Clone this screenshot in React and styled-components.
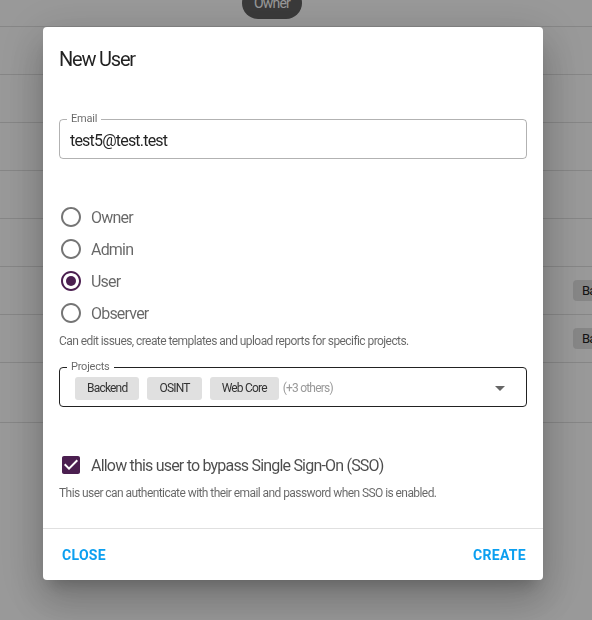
import React from 'react'
import styled, { createGlobalStyle } from 'styled-components'

const GlobalStyle = createGlobalStyle`
  body {
    margin: 0;
    font-family: Roboto, "Liberation Sans", sans-serif;
    letter-spacing: -0.05em;
    background: #fff;
  }
`

const purple = '#4b1f50'
const blue = '#0b9ff0'

// --- page behind the dialog ---
const Page = styled.div`
  width: 592px;
  height: 620px;
  overflow: hidden;
`

const Table = styled.div`
  margin-top: -21px;
`

const Row = styled.div`
  display: grid;
  grid-template-columns: 242px 331px 1fr;
  align-items: center;
  height: ${p => p.tall ? 59 : 47}px;
  border-bottom: 1px solid #e0e0e0;
`

const RoleChip = styled.span`
  display: inline-flex;
  align-items: center;
  height: 32px;
  padding: 0 12px;
  border-radius: 16px;
  background: #616161;
  color: #fff;
  font-size: 14px;
  width: max-content;
`

const TagChip = styled.span`
  grid-column: 3;
  display: inline-flex;
  align-items: center;
  height: 21px;
  padding: 0 9px;
  border-radius: 4px;
  background: #e0e0e0;
  color: #222;
  font-size: 13px;
  white-space: nowrap;
`

// --- dialog ---
const Backdrop = styled.div`
  position: fixed;
  inset: 0;
  background: rgba(0, 0, 0, 0.4);
  display: flex;
  justify-content: center;
  align-items: flex-start;
  padding: 27px 6px 0 0;
`

const Dialog = styled.div`
  width: 500px;
  background: #fff;
  border-radius: 4px;
  box-shadow: 0px 11px 15px -7px rgba(0,0,0,0.2), 0px 24px 38px 3px rgba(0,0,0,0.14), 0px 9px 46px 8px rgba(0,0,0,0.12);
  color: rgba(0, 0, 0, 0.87);
`

const Title = styled.h2`
  margin: 0;
  padding: 16px;
  font-size: 20px;
  font-weight: 400;
  line-height: 32px;
  letter-spacing: -0.06em;
`

const Content = styled.div`
  padding: 0 16px 27px;
  display: flex;
  flex-direction: column;
`

const Field = styled.fieldset`
  margin: ${p => p.top}px 0 0;
  padding: 0 ${p => p.pr}px 3px ${p => p.pl}px;
  min-width: 0;
  border: 1px solid ${p => p.dark ? '#222' : 'rgba(0,0,0,0.3)'};
  border-radius: 4px;
  height: 46px;
  box-sizing: border-box;
`

const Legend = styled.legend`
  margin-left: ${p => 7 - p.pl}px;
  padding: 0 4px;
  font-size: 11px;
  line-height: 12px;
  letter-spacing: -0.02em;
  color: rgba(0, 0, 0, 0.6);
`

const Input = styled.div`
  height: 30px;
  display: flex;
  align-items: center;
  font-size: 16px;
  color: rgba(0, 0, 0, 0.87);
`

const SelectRow = styled.div`
  height: 30px;
  display: flex;
  align-items: center;
  gap: 8px;
`

const ProjectChip = styled.span`
  height: 23px;
  padding: 0 12px;
  display: inline-flex;
  align-items: center;
  border-radius: 3px;
  background: #e0e0e0;
  color: #333;
  font-size: 12px;
`

const Others = styled.span`
  margin-left: -4px;
  font-size: 12px;
  color: #999;
  flex: 1;
`

const RadioGroup = styled.div`
  margin-top: 42px;
  display: flex;
  flex-direction: column;
`

const OptionRow = styled.label`
  height: 32px;
  display: flex;
  align-items: center;
  gap: 8px;
  font-size: 16px;
  color: ${p => p.strong ? 'rgba(0,0,0,0.7)' : 'rgba(0,0,0,0.6)'};
  margin-top: ${p => p.top || 0}px;
`

const Helper = styled.p`
  margin: 4px 0 0;
  font-size: 12px;
  line-height: 16px;
  letter-spacing: -0.57px;
  color: rgba(0, 0, 0, 0.6);
`

const Divider = styled.hr`
  margin: 0;
  border: none;
  border-top: 1px solid #e0e0e0;
`

const Actions = styled.div`
  height: 51px;
  padding: 0 16px;
  display: flex;
  align-items: center;
  justify-content: space-between;
`

const Button = styled.button`
  border: none;
  background: none;
  padding: 6px 1px 6px 3px;
  font-family: inherit;
  font-size: 14px;
  font-weight: 700;
  letter-spacing: 0.3px;
  color: ${blue};
  text-transform: uppercase;
  cursor: pointer;
`

const RadioIcon = ({ checked }) => (
  <svg width="24" height="24" viewBox="0 0 24 24">
    <path
      fill={checked ? purple : '#757575'}
      d="M12 2C6.48 2 2 6.48 2 12s4.48 10 10 10 10-4.48 10-10S17.52 2 12 2zm0 18c-4.42 0-8-3.58-8-8s3.58-8 8-8 8 3.58 8 8-3.58 8-8 8z"
    />
    {checked && <circle cx="12" cy="12" r="5" fill={purple} />}
  </svg>
)

const CheckIcon = () => (
  <svg width="24" height="24" viewBox="0 0 24 24">
    <path
      fill={purple}
      d="M19 3H5c-1.11 0-2 .9-2 2v14c0 1.1.89 2 2 2h14c1.11 0 2-.9 2-2V5c0-1.1-.89-2-2-2zm-9 14l-5-5 1.41-1.41L10 14.17l7.59-7.59L19 8l-9 9z"
    />
  </svg>
)

const ArrowDown = () => (
  <svg width="24" height="24" viewBox="0 0 24 24">
    <path fill="#666" d="M7 10l5 5 5-5z" />
  </svg>
)

const roles = ['Owner', 'Admin', 'User', 'Observer']

export default function App() {
  return (
    <>
      <GlobalStyle />
      <Page>
        <Table>
          <Row><span /><RoleChip>Owner</RoleChip></Row>
          <Row />
          <Row />
          <Row />
          <Row />
          <Row />
          <Row><span /><span /><TagChip>Backend</TagChip></Row>
          <Row><span /><span /><TagChip>Backend</TagChip></Row>
          <Row tall />
        </Table>
      </Page>

      <Backdrop>
        <Dialog>
          <Title>New User</Title>
          <Content>
            <Field top={22} pl={10} pr={10}>
              <Legend pl={10}>Email</Legend>
              <Input>test5@test.test</Input>
            </Field>

            <RadioGroup>
              {roles.map(r => (
                <OptionRow key={r}>
                  <RadioIcon checked={r === 'User'} />
                  {r}
                </OptionRow>
              ))}
            </RadioGroup>
            <Helper>Can edit issues, create templates and upload reports for specific projects.</Helper>

            <Field top={12} dark pl={15} pr={14}>
              <Legend pl={15}>Projects</Legend>
              <SelectRow>
                <ProjectChip>Backend</ProjectChip>
                <ProjectChip>OSINT</ProjectChip>
                <ProjectChip>Web Core</ProjectChip>
                <Others>(+3 others)</Others>
                <ArrowDown />
              </SelectRow>
            </Field>

            <OptionRow top={42} strong>
              <CheckIcon />
              Allow this user to bypass Single Sign-On (SSO)
            </OptionRow>
            <Helper>This user can authenticate with their email and password when SSO is enabled.</Helper>
          </Content>
          <Divider />
          <Actions>
            <Button>Close</Button>
            <Button>Create</Button>
          </Actions>
        </Dialog>
      </Backdrop>
    </>
  )
}
